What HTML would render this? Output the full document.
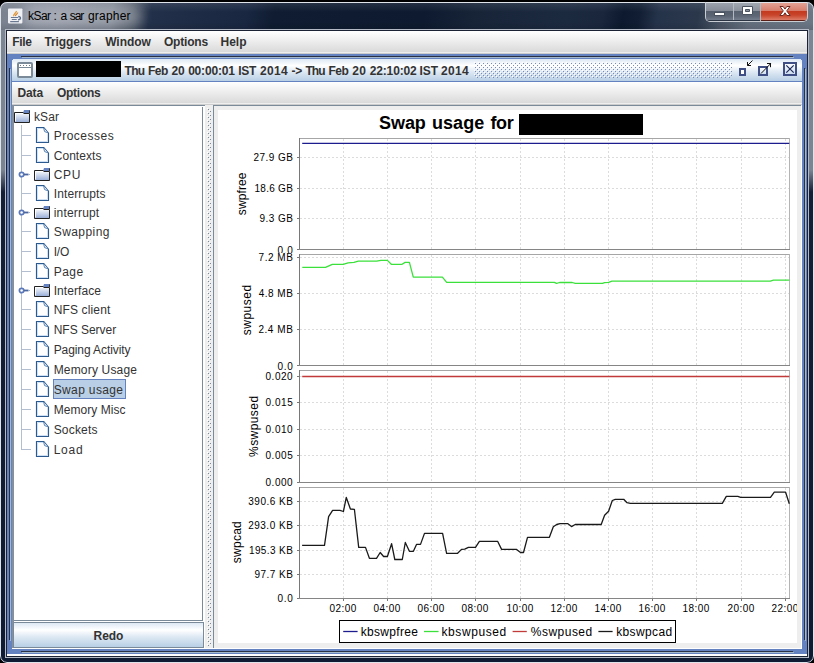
<!DOCTYPE html>
<html><head><meta charset="utf-8"><title>kSar : a sar grapher</title>
<style>
html,body{margin:0;padding:0;}
body{width:814px;height:663px;overflow:hidden;position:relative;background:#000;font-family:"Liberation Sans",sans-serif;font-size:12px;color:#333;}
div{position:absolute;box-sizing:border-box;}
svg{position:absolute;left:0;top:0;overflow:visible;}
text{font-family:"Liberation Sans",sans-serif;white-space:pre;}
</style></head><body>

<div style="left:0;top:2px;width:814px;height:661px;border-radius:7px;overflow:hidden;background:#0d1a2e;">
  <div style="left:0;top:0;width:814px;height:661px;background:linear-gradient(to bottom,#7d8694 0px,#7b8492 168px,#131f36 190px,#0f1b32 661px);"></div>
  <div style="left:0;top:0;width:814px;height:28px;background:linear-gradient(100deg,#7a8290 0px,#808796 60px,#727a88 112px,#4a5464 133px,#223049 150px,#1d2b44 200px,#192741 245px,#0f1c31 272px,#0e1a2f 420px,#172438 470px,#1c2a40 560px,#19263c 596px,#0c192e 616px,#111e33 632px,#25334a 650px,#2b384c 690px,#4a5565 712px,#646f7e 740px,#6d7887 814px);"></div>
  <div style="left:0;top:0;width:814px;height:28px;background:linear-gradient(to bottom,rgba(255,255,255,.10) 0px,rgba(255,255,255,0) 10px,rgba(0,0,0,0) 20px,rgba(0,0,0,.10) 28px);"></div>
  <div style="left:22px;top:3px;width:120px;height:22px;border-radius:11px;background:rgba(255,255,255,.30);filter:blur(6px);"></div>
  <div style="left:0;top:0;width:814px;height:661px;border-radius:7px;border:1px solid #dfe3ea;"></div>
</div>
<div style="left:5px;top:29px;width:804px;height:629px;border:1px solid #b4bac5;"></div>
<div style="left:6px;top:30px;width:802px;height:627px;border:1px solid #1a2233;background:#fff;"></div>

<svg width="814" height="32" viewBox="0 0 814 32">
  <rect x="8" y="8.4" width="14.4" height="15" rx="0.8" fill="#eef0f4"/>
  <path d="M13.7 16.3 C13 14.2 15.8 13.4 16.6 11" stroke="#e39a3c" stroke-width="1.3" fill="none"/>
  <path d="M15.5 16.1 C15.1 14.7 17.5 14.1 17.8 12.5" stroke="#d9822b" stroke-width="1.2" fill="none"/>
  <path d="M10.9 17.5 H18 M11.8 19.5 H16.7 M10.2 21.6 H18.9" stroke="#6a7891" stroke-width="1.1" fill="none"/>
  <path d="M18.2 16.5 C21.4 16.7 21.2 19.6 18 19.8" stroke="#5f6f8c" stroke-width="1.3" fill="none"/>
</svg>

<div style="left:705px;top:2px;width:103px;height:20px;border:1px solid #c9cdd4;border-top:none;border-radius:0 0 5px 5px;"></div>
<div style="left:706px;top:3px;width:101px;height:18px;border-radius:0 0 4px 4px;overflow:hidden;background:#b3b8c1;">
  <div style="left:0;top:0;width:27px;height:17px;background:linear-gradient(to bottom,#9da3ad 0,#858c98 8px,#555e6c 8px,#5b6473 13px,#727b89 17px);"></div>
  <div style="left:28px;top:0;width:26px;height:17px;background:linear-gradient(to bottom,#a2a8b1 0,#8a919c 8px,#58616f 8px,#5e6776 13px,#757e8c 17px);"></div>
  <div style="left:55px;top:0;width:46px;height:17px;background:linear-gradient(to bottom,#e3a294 0,#d67d6c 8px,#c2391f 8px,#c8442a 12px,#dc7c68 17px);"></div>
  <div style="left:0;top:17px;width:54px;height:1px;background:#2b3443;"></div>
  <div style="left:55px;top:17px;width:46px;height:1px;background:#5a2018;"></div>
</div>
<svg width="814" height="32" viewBox="0 0 814 32">
  <rect x="714.5" y="12.5" width="10" height="3" fill="#fff" stroke="#4a5260" stroke-width="1"/>
  <path d="M742.5 6.5h10v8h-10z M745.5 9.5h4v2h-4z" fill="#fff" fill-rule="evenodd" stroke="#4a5260" stroke-width="1"/>
  <path d="M780 6.5h3.2l1.8 2.6l1.8-2.6h3.2l-3.3 4.4l3.4 4.6h-3.3l-1.8-2.7l-1.8 2.7h-3.3l3.4-4.6z" fill="#fff" stroke="#6e2a20" stroke-width="1" stroke-linejoin="round"/>
</svg>

<div style="left:7px;top:31px;width:800px;height:23px;background:linear-gradient(to bottom,#fff 0,#dadada 21px);"></div>
<div style="left:7px;top:52px;width:800px;height:1px;background:#eee;"></div>
<div style="left:7px;top:53px;width:800px;height:1px;background:#ccc;"></div>

<div style="left:7px;top:54px;width:800px;height:600px;background:#6382bf;"></div>
<div style="left:21px;top:56px;width:772px;height:1px;background:#2a3145;"></div>
<div style="left:22px;top:57px;width:772px;height:1px;background:#a3b8cc;"></div>
<div style="left:21px;top:651px;width:772px;height:1px;background:#2a3145;"></div>
<div style="left:22px;top:652px;width:772px;height:1px;background:#a3b8cc;"></div>
<div style="left:9px;top:68px;width:1px;height:572px;background:#2a3145;"></div>
<div style="left:10px;top:69px;width:1px;height:572px;background:#a3b8cc;"></div>
<div style="left:804px;top:68px;width:1px;height:572px;background:#2a3145;"></div>
<div style="left:805px;top:69px;width:1px;height:572px;background:#a3b8cc;"></div>
<div style="left:7px;top:654px;width:800px;height:2px;background:#fff;"></div>
<div style="left:12px;top:59px;width:790px;height:590px;background:#eee;"></div>
<div style="left:12px;top:59px;width:790px;height:23px;background:linear-gradient(to bottom,#dde8f3 0,#fff 6.6px,#dde8f3 13.2px,#b8cfe5 22px);"></div>
<div style="left:12px;top:81px;width:790px;height:1px;background:#6382bf;"></div>
<div style="left:12px;top:59px;width:1px;height:1px;background:#6382bf;"></div>
<div style="left:801px;top:59px;width:1px;height:1px;background:#6382bf;"></div>
<svg width="814" height="110" viewBox="0 0 814 110">
  <defs>
    <pattern id="bumps" x="474" y="62" width="4" height="4" patternUnits="userSpaceOnUse">
      <rect x="0" y="0" width="1" height="1" fill="#fff"/><rect x="2" y="2" width="1" height="1" fill="#fff"/>
      <rect x="1" y="1" width="1" height="1" fill="#7b8cb4"/><rect x="3" y="3" width="1" height="1" fill="#7b8cb4"/>
    </pattern>
    <linearGradient id="ig" x1="0" y1="0" x2="0" y2="1"><stop offset="0" stop-color="#fff"/><stop offset="1" stop-color="#c8daee"/></linearGradient>
  </defs>
  <rect x="18" y="63" width="14" height="14" rx="1" fill="#fff" stroke="#7a8a99" stroke-width="2"/>
  <rect x="19" y="67" width="12" height="1" fill="#7a8a99"/>
  <rect x="20" y="65" width="1" height="1" fill="#6c7a88"/><rect x="23" y="65" width="1" height="1" fill="#6c7a88"/><rect x="26" y="65" width="1" height="1" fill="#6c7a88"/><rect x="29" y="65" width="1" height="1" fill="#6c7a88"/>
  <rect x="36" y="61" width="85" height="16" fill="#000"/>
  <rect x="474" y="62" width="258" height="16" fill="url(#bumps)" shape-rendering="crispEdges"/>
  <rect x="740" y="69" width="5" height="6" fill="#fff" stroke="#3f4f86" stroke-width="2"/>
  <path d="M752.5 60.5 L747.5 65.5 M747.5 62 V65.5 H751" stroke="#111" stroke-width="1" fill="none"/>
  <rect x="759" y="67" width="8" height="8" fill="url(#ig)" stroke="#3f4f86" stroke-width="2"/>
  <path d="M761 73.5 L770.5 63.8 M767 63.5 H771 M770.5 63.5 V67.2" stroke="#111" stroke-width="1" fill="none"/>
  <rect x="784" y="63" width="12" height="12" fill="url(#ig)" stroke="#3f4f86" stroke-width="2"/>
  <path d="M786.3 65.3 L793.7 72.7 M793.7 65.3 L786.3 72.7" stroke="#1f2a5a" stroke-width="1.2" fill="none"/>
</svg>

<div style="left:12px;top:82px;width:790px;height:23px;background:linear-gradient(to bottom,#fff 0,#dadada 21px);"></div>
<div style="left:12px;top:103px;width:790px;height:1px;background:#eee;"></div>
<div style="left:12px;top:104px;width:790px;height:1px;background:#ccc;"></div>

<div style="left:12px;top:105px;width:192px;height:517px;background:#fff;"></div>
<div style="left:12px;top:105px;width:193px;height:1px;background:#7a8a99;"></div>
<div style="left:12px;top:105px;width:2px;height:544px;background:#8490a0;"></div>
<div style="left:202px;top:107px;width:1px;height:514px;background:#7a8a99;"></div>
<div style="left:14px;top:620px;width:189px;height:1px;background:#7a8a99;"></div>
<div style="left:14px;top:621px;width:191px;height:1px;background:#fff;"></div>
<div style="left:203px;top:106px;width:2px;height:543px;background:#fff;"></div>
<div style="left:13px;top:622px;width:191px;height:26px;border:1px solid #7a8a99;background:linear-gradient(to bottom,#dde8f3 0,#fff 7px,#dde8f3 14px,#b8cfe5 24px);"></div>
<div style="left:12px;top:648px;width:790px;height:1px;background:#fff;"></div>
<div style="left:205px;top:105px;width:8px;height:543px;background:#eee;"></div>
<svg width="814" height="663" viewBox="0 0 814 663" shape-rendering="crispEdges">
<defs>
 <pattern id="dv" x="207" y="108" width="4" height="4" patternUnits="userSpaceOnUse">
  <rect x="0" y="0" width="1" height="1" fill="#fff"/><rect x="2" y="2" width="1" height="1" fill="#fff"/>
  <rect x="1" y="1" width="1" height="1" fill="#7a8a99"/><rect x="3" y="3" width="1" height="1" fill="#7a8a99"/>
 </pattern>
 <linearGradient id="fg" x1="0" y1="0" x2="0" y2="1"><stop offset="0" stop-color="#fff"/><stop offset="1" stop-color="#94abd6"/></linearGradient>
 <linearGradient id="lg" x1="0" y1="0" x2="1" y2="1"><stop offset="0" stop-color="#fff"/><stop offset="1" stop-color="#dbe7f5"/></linearGradient>
 <g id="folder" shape-rendering="auto">
   <path d="M9 3 L10 0 H16 V3 Z" fill="#6382bf"/>
   <path d="M0.5 2.5 H9.2 L9.8 3.5 H15.5 V12.5 H0.5 Z" fill="url(#fg)" stroke="#222" stroke-width="1"/>
   <path d="M15.5 0.5 V3" stroke="#333" stroke-width="1"/>
   <path d="M1.5 11.5 V3.5 H9" stroke="#fff" stroke-width="1" fill="none" opacity=".9"/>
 </g>
 <g id="file" shape-rendering="auto">
   <path d="M0.5 0.5 H7.8 L12.5 6.2 V15.5 H0.5 Z" fill="#fff" stroke="#2d5a8e" stroke-width="1.15" stroke-linejoin="miter"/>
   <path d="M1.5 14.5 V1.5 H7.2 M11.5 7 V14.5 H1.5" fill="none" stroke="#cfe0f5" stroke-width="1"/>
   <path d="M7.6 1 L8.6 4.6 L12 5.8" stroke="#4d79ad" stroke-width="0.9" fill="#e6effa"/>
 </g>
 <g id="handle" shape-rendering="auto">
   <circle cx="2.6" cy="0.5" r="2.2" fill="#fff" stroke="#5b78b8" stroke-width="1.7"/>
   <rect x="5" y="-0.4" width="4.5" height="1.8" fill="#4c66a0"/>
   <rect x="9.5" y="0" width="1.5" height="1" fill="#9fb0cc"/>
 </g>
</defs>
<rect x="207" y="108" width="4" height="538" fill="url(#dv)"/>
<use href="#folder" x="14" y="110"/>
<use href="#file" x="36" y="127"/>
<use href="#file" x="36" y="147"/>
<use href="#folder" x="34" y="168"/>
<use href="#file" x="36" y="185"/>
<use href="#folder" x="34" y="206"/>
<use href="#file" x="36" y="223"/>
<use href="#file" x="36" y="243"/>
<use href="#file" x="36" y="263"/>
<use href="#folder" x="34" y="284"/>
<use href="#file" x="36" y="301"/>
<use href="#file" x="36" y="321"/>
<use href="#file" x="36" y="341"/>
<use href="#file" x="36" y="361"/>
<use href="#file" x="36" y="381"/>
<rect x="53" y="379" width="73" height="20" fill="#b8cfe5"/><rect x="53.5" y="379.5" width="72" height="19" fill="none" stroke="#6382bf" stroke-width="1"/>
<use href="#file" x="36" y="401"/>
<use href="#file" x="36" y="421"/>
<use href="#file" x="36" y="441"/>
<rect x="21" y="125" width="1" height="325" fill="#b3bfd0"/>
<rect x="21" y="135" width="10" height="1" fill="#b3bfd0"/>
<rect x="21" y="155" width="10" height="1" fill="#b3bfd0"/>
<use href="#handle" x="19" y="174"/>
<rect x="21" y="193" width="10" height="1" fill="#b3bfd0"/>
<use href="#handle" x="19" y="212"/>
<rect x="21" y="231" width="10" height="1" fill="#b3bfd0"/>
<rect x="21" y="251" width="10" height="1" fill="#b3bfd0"/>
<rect x="21" y="271" width="10" height="1" fill="#b3bfd0"/>
<use href="#handle" x="19" y="290"/>
<rect x="21" y="309" width="10" height="1" fill="#b3bfd0"/>
<rect x="21" y="329" width="10" height="1" fill="#b3bfd0"/>
<rect x="21" y="349" width="10" height="1" fill="#b3bfd0"/>
<rect x="21" y="369" width="10" height="1" fill="#b3bfd0"/>
<rect x="21" y="389" width="10" height="1" fill="#b3bfd0"/>
<rect x="21" y="409" width="10" height="1" fill="#b3bfd0"/>
<rect x="21" y="429" width="10" height="1" fill="#b3bfd0"/>
<rect x="21" y="449" width="10" height="1" fill="#b3bfd0"/>
</svg>

<div style="left:213px;top:105px;width:588px;height:543px;background:#eee;border-left:1px solid #7a8a99;border-top:1px solid #7a8a99;"></div>
<div style="left:801px;top:106px;width:1px;height:543px;background:#fff;"></div>
<div style="left:218px;top:110px;width:579px;height:533px;background:#fff;"></div>
<div style="left:519px;top:114px;width:124px;height:21px;background:#000;"></div>
<svg width="814" height="663" viewBox="0 0 814 663">
<g shape-rendering="crispEdges">
<rect x="299" y="138" width="491" height="1" fill="#a6a6a6"/>
<rect x="789" y="138" width="1" height="112" fill="#b4b4b4"/>
<line x1="300" y1="157.5" x2="789" y2="157.5" stroke="#dcdcdc" stroke-width="1" stroke-dasharray="2,2"/>
<line x1="300" y1="188.5" x2="789" y2="188.5" stroke="#dcdcdc" stroke-width="1" stroke-dasharray="2,2"/>
<line x1="300" y1="218.5" x2="789" y2="218.5" stroke="#dcdcdc" stroke-width="1" stroke-dasharray="2,2"/>
<line x1="343.5" y1="139" x2="343.5" y2="249" stroke="#dcdcdc" stroke-width="1" stroke-dasharray="2,2"/>
<line x1="387.5" y1="139" x2="387.5" y2="249" stroke="#dcdcdc" stroke-width="1" stroke-dasharray="2,2"/>
<line x1="431.5" y1="139" x2="431.5" y2="249" stroke="#dcdcdc" stroke-width="1" stroke-dasharray="2,2"/>
<line x1="475.5" y1="139" x2="475.5" y2="249" stroke="#dcdcdc" stroke-width="1" stroke-dasharray="2,2"/>
<line x1="520.5" y1="139" x2="520.5" y2="249" stroke="#dcdcdc" stroke-width="1" stroke-dasharray="2,2"/>
<line x1="564.5" y1="139" x2="564.5" y2="249" stroke="#dcdcdc" stroke-width="1" stroke-dasharray="2,2"/>
<line x1="608.5" y1="139" x2="608.5" y2="249" stroke="#dcdcdc" stroke-width="1" stroke-dasharray="2,2"/>
<line x1="652.5" y1="139" x2="652.5" y2="249" stroke="#dcdcdc" stroke-width="1" stroke-dasharray="2,2"/>
<line x1="696.5" y1="139" x2="696.5" y2="249" stroke="#dcdcdc" stroke-width="1" stroke-dasharray="2,2"/>
<line x1="741.5" y1="139" x2="741.5" y2="249" stroke="#dcdcdc" stroke-width="1" stroke-dasharray="2,2"/>
<line x1="785.5" y1="139" x2="785.5" y2="249" stroke="#dcdcdc" stroke-width="1" stroke-dasharray="2,2"/>
<rect x="299" y="138" width="1" height="112" fill="#787878"/>
<rect x="299" y="249" width="491" height="1" fill="#858585"/>
<rect x="297" y="157" width="2" height="1" fill="#787878"/>
<rect x="297" y="188" width="2" height="1" fill="#787878"/>
<rect x="297" y="218" width="2" height="1" fill="#787878"/>
<rect x="297" y="249" width="2" height="1" fill="#787878"/>
<rect x="299" y="254" width="491" height="1" fill="#a6a6a6"/>
<rect x="789" y="254" width="1" height="112" fill="#b4b4b4"/>
<line x1="300" y1="257.5" x2="789" y2="257.5" stroke="#dcdcdc" stroke-width="1" stroke-dasharray="2,2"/>
<line x1="300" y1="293.5" x2="789" y2="293.5" stroke="#dcdcdc" stroke-width="1" stroke-dasharray="2,2"/>
<line x1="300" y1="329.5" x2="789" y2="329.5" stroke="#dcdcdc" stroke-width="1" stroke-dasharray="2,2"/>
<line x1="343.5" y1="255" x2="343.5" y2="365" stroke="#dcdcdc" stroke-width="1" stroke-dasharray="2,2"/>
<line x1="387.5" y1="255" x2="387.5" y2="365" stroke="#dcdcdc" stroke-width="1" stroke-dasharray="2,2"/>
<line x1="431.5" y1="255" x2="431.5" y2="365" stroke="#dcdcdc" stroke-width="1" stroke-dasharray="2,2"/>
<line x1="475.5" y1="255" x2="475.5" y2="365" stroke="#dcdcdc" stroke-width="1" stroke-dasharray="2,2"/>
<line x1="520.5" y1="255" x2="520.5" y2="365" stroke="#dcdcdc" stroke-width="1" stroke-dasharray="2,2"/>
<line x1="564.5" y1="255" x2="564.5" y2="365" stroke="#dcdcdc" stroke-width="1" stroke-dasharray="2,2"/>
<line x1="608.5" y1="255" x2="608.5" y2="365" stroke="#dcdcdc" stroke-width="1" stroke-dasharray="2,2"/>
<line x1="652.5" y1="255" x2="652.5" y2="365" stroke="#dcdcdc" stroke-width="1" stroke-dasharray="2,2"/>
<line x1="696.5" y1="255" x2="696.5" y2="365" stroke="#dcdcdc" stroke-width="1" stroke-dasharray="2,2"/>
<line x1="741.5" y1="255" x2="741.5" y2="365" stroke="#dcdcdc" stroke-width="1" stroke-dasharray="2,2"/>
<line x1="785.5" y1="255" x2="785.5" y2="365" stroke="#dcdcdc" stroke-width="1" stroke-dasharray="2,2"/>
<rect x="299" y="254" width="1" height="112" fill="#787878"/>
<rect x="299" y="365" width="491" height="1" fill="#858585"/>
<rect x="297" y="257" width="2" height="1" fill="#787878"/>
<rect x="297" y="293" width="2" height="1" fill="#787878"/>
<rect x="297" y="329" width="2" height="1" fill="#787878"/>
<rect x="297" y="365" width="2" height="1" fill="#787878"/>
<rect x="299" y="370" width="491" height="1" fill="#a6a6a6"/>
<rect x="789" y="370" width="1" height="113" fill="#b4b4b4"/>
<line x1="300" y1="376.5" x2="789" y2="376.5" stroke="#dcdcdc" stroke-width="1" stroke-dasharray="2,2"/>
<line x1="300" y1="402.5" x2="789" y2="402.5" stroke="#dcdcdc" stroke-width="1" stroke-dasharray="2,2"/>
<line x1="300" y1="429.5" x2="789" y2="429.5" stroke="#dcdcdc" stroke-width="1" stroke-dasharray="2,2"/>
<line x1="300" y1="455.5" x2="789" y2="455.5" stroke="#dcdcdc" stroke-width="1" stroke-dasharray="2,2"/>
<line x1="343.5" y1="371" x2="343.5" y2="482" stroke="#dcdcdc" stroke-width="1" stroke-dasharray="2,2"/>
<line x1="387.5" y1="371" x2="387.5" y2="482" stroke="#dcdcdc" stroke-width="1" stroke-dasharray="2,2"/>
<line x1="431.5" y1="371" x2="431.5" y2="482" stroke="#dcdcdc" stroke-width="1" stroke-dasharray="2,2"/>
<line x1="475.5" y1="371" x2="475.5" y2="482" stroke="#dcdcdc" stroke-width="1" stroke-dasharray="2,2"/>
<line x1="520.5" y1="371" x2="520.5" y2="482" stroke="#dcdcdc" stroke-width="1" stroke-dasharray="2,2"/>
<line x1="564.5" y1="371" x2="564.5" y2="482" stroke="#dcdcdc" stroke-width="1" stroke-dasharray="2,2"/>
<line x1="608.5" y1="371" x2="608.5" y2="482" stroke="#dcdcdc" stroke-width="1" stroke-dasharray="2,2"/>
<line x1="652.5" y1="371" x2="652.5" y2="482" stroke="#dcdcdc" stroke-width="1" stroke-dasharray="2,2"/>
<line x1="696.5" y1="371" x2="696.5" y2="482" stroke="#dcdcdc" stroke-width="1" stroke-dasharray="2,2"/>
<line x1="741.5" y1="371" x2="741.5" y2="482" stroke="#dcdcdc" stroke-width="1" stroke-dasharray="2,2"/>
<line x1="785.5" y1="371" x2="785.5" y2="482" stroke="#dcdcdc" stroke-width="1" stroke-dasharray="2,2"/>
<rect x="299" y="370" width="1" height="113" fill="#787878"/>
<rect x="299" y="482" width="491" height="1" fill="#858585"/>
<rect x="297" y="376" width="2" height="1" fill="#787878"/>
<rect x="297" y="402" width="2" height="1" fill="#787878"/>
<rect x="297" y="429" width="2" height="1" fill="#787878"/>
<rect x="297" y="455" width="2" height="1" fill="#787878"/>
<rect x="297" y="482" width="2" height="1" fill="#787878"/>
<rect x="299" y="487" width="491" height="1" fill="#a6a6a6"/>
<rect x="789" y="487" width="1" height="112" fill="#b4b4b4"/>
<line x1="300" y1="501.5" x2="789" y2="501.5" stroke="#dcdcdc" stroke-width="1" stroke-dasharray="2,2"/>
<line x1="300" y1="525.5" x2="789" y2="525.5" stroke="#dcdcdc" stroke-width="1" stroke-dasharray="2,2"/>
<line x1="300" y1="550.5" x2="789" y2="550.5" stroke="#dcdcdc" stroke-width="1" stroke-dasharray="2,2"/>
<line x1="300" y1="574.5" x2="789" y2="574.5" stroke="#dcdcdc" stroke-width="1" stroke-dasharray="2,2"/>
<line x1="343.5" y1="488" x2="343.5" y2="598" stroke="#dcdcdc" stroke-width="1" stroke-dasharray="2,2"/>
<line x1="387.5" y1="488" x2="387.5" y2="598" stroke="#dcdcdc" stroke-width="1" stroke-dasharray="2,2"/>
<line x1="431.5" y1="488" x2="431.5" y2="598" stroke="#dcdcdc" stroke-width="1" stroke-dasharray="2,2"/>
<line x1="475.5" y1="488" x2="475.5" y2="598" stroke="#dcdcdc" stroke-width="1" stroke-dasharray="2,2"/>
<line x1="520.5" y1="488" x2="520.5" y2="598" stroke="#dcdcdc" stroke-width="1" stroke-dasharray="2,2"/>
<line x1="564.5" y1="488" x2="564.5" y2="598" stroke="#dcdcdc" stroke-width="1" stroke-dasharray="2,2"/>
<line x1="608.5" y1="488" x2="608.5" y2="598" stroke="#dcdcdc" stroke-width="1" stroke-dasharray="2,2"/>
<line x1="652.5" y1="488" x2="652.5" y2="598" stroke="#dcdcdc" stroke-width="1" stroke-dasharray="2,2"/>
<line x1="696.5" y1="488" x2="696.5" y2="598" stroke="#dcdcdc" stroke-width="1" stroke-dasharray="2,2"/>
<line x1="741.5" y1="488" x2="741.5" y2="598" stroke="#dcdcdc" stroke-width="1" stroke-dasharray="2,2"/>
<line x1="785.5" y1="488" x2="785.5" y2="598" stroke="#dcdcdc" stroke-width="1" stroke-dasharray="2,2"/>
<rect x="299" y="487" width="1" height="112" fill="#787878"/>
<rect x="299" y="598" width="491" height="1" fill="#858585"/>
<rect x="297" y="501" width="2" height="1" fill="#787878"/>
<rect x="297" y="525" width="2" height="1" fill="#787878"/>
<rect x="297" y="550" width="2" height="1" fill="#787878"/>
<rect x="297" y="574" width="2" height="1" fill="#787878"/>
<rect x="297" y="598" width="2" height="1" fill="#787878"/>
<rect x="343" y="599" width="1" height="2" fill="#787878"/>
<rect x="387" y="599" width="1" height="2" fill="#787878"/>
<rect x="431" y="599" width="1" height="2" fill="#787878"/>
<rect x="475" y="599" width="1" height="2" fill="#787878"/>
<rect x="520" y="599" width="1" height="2" fill="#787878"/>
<rect x="564" y="599" width="1" height="2" fill="#787878"/>
<rect x="608" y="599" width="1" height="2" fill="#787878"/>
<rect x="652" y="599" width="1" height="2" fill="#787878"/>
<rect x="696" y="599" width="1" height="2" fill="#787878"/>
<rect x="741" y="599" width="1" height="2" fill="#787878"/>
<rect x="785" y="599" width="1" height="2" fill="#787878"/>
</g>
<clipPath id="c0"><rect x="260" y="240" width="40" height="13"/></clipPath>
<text x="277.41" y="254" font-size="10" fill="#000" letter-spacing="0.690" clip-path="url(#c0)">0.0</text>
<text x="253.50" y="160.8" font-size="10" fill="#000" letter-spacing="0.440">27.9 GB</text>
<text x="254.44" y="191.8" font-size="10" fill="#000" letter-spacing="0.283">18.6 GB</text>
<text x="259.43" y="221.8" font-size="10" fill="#000" letter-spacing="0.454">9.3 GB</text>
<text x="258.59" y="260.8" font-size="10" fill="#000" letter-spacing="0.512">7.2 MB</text>
<text x="258.67" y="296.8" font-size="10" fill="#000" letter-spacing="0.495">4.8 MB</text>
<text x="258.40" y="332.8" font-size="10" fill="#000" letter-spacing="0.550">2.4 MB</text>
<text x="277.41" y="369.8" font-size="10" fill="#000" letter-spacing="0.690">0.0</text>
<text x="265.51" y="379.8" font-size="10" fill="#000" letter-spacing="0.539">0.020</text>
<text x="265.51" y="405.8" font-size="10" fill="#000" letter-spacing="0.547">0.015</text>
<text x="265.51" y="432.8" font-size="10" fill="#000" letter-spacing="0.539">0.010</text>
<text x="265.51" y="458.8" font-size="10" fill="#000" letter-spacing="0.547">0.005</text>
<text x="265.51" y="485.8" font-size="10" fill="#000" letter-spacing="0.539">0.000</text>
<text x="248.32" y="504.8" font-size="10" fill="#000" letter-spacing="0.481">390.6 KB</text>
<text x="248.20" y="528.8" font-size="10" fill="#000" letter-spacing="0.498">293.0 KB</text>
<text x="248.94" y="553.8" font-size="10" fill="#000" letter-spacing="0.392">195.3 KB</text>
<text x="254.43" y="577.8" font-size="10" fill="#000" letter-spacing="0.469">97.7 KB</text>
<text x="277.41" y="601.8" font-size="10" fill="#000" letter-spacing="0.690">0.0</text>
<text x="329.60" y="611.6" font-size="10" fill="#000" letter-spacing="0.442">02:00</text>
<text x="373.60" y="611.6" font-size="10" fill="#000" letter-spacing="0.442">04:00</text>
<text x="417.60" y="611.6" font-size="10" fill="#000" letter-spacing="0.442">06:00</text>
<text x="461.60" y="611.6" font-size="10" fill="#000" letter-spacing="0.442">08:00</text>
<text x="506.60" y="611.6" font-size="10" fill="#000" letter-spacing="0.442">10:00</text>
<text x="550.60" y="611.6" font-size="10" fill="#000" letter-spacing="0.442">12:00</text>
<text x="594.60" y="611.6" font-size="10" fill="#000" letter-spacing="0.442">14:00</text>
<text x="638.60" y="611.6" font-size="10" fill="#000" letter-spacing="0.442">16:00</text>
<text x="682.60" y="611.6" font-size="10" fill="#000" letter-spacing="0.442">18:00</text>
<text x="727.60" y="611.6" font-size="10" fill="#000" letter-spacing="0.442">20:00</text>
<text x="771.60" y="611.6" font-size="10" fill="#000" letter-spacing="0.442" clip-path="url(#c1)">22:00</text>
<clipPath id="c1"><rect x="760" y="600" width="37" height="15"/></clipPath>
<text transform="translate(246.4,215.13) rotate(-90)" font-size="12" fill="#000" letter-spacing="0.108">swpfree</text>
<text transform="translate(251.3,335.33) rotate(-90)" font-size="12" fill="#000" letter-spacing="0.524">swpused</text>
<text transform="translate(258.4,456.93) rotate(-90)" font-size="12" fill="#000" letter-spacing="0.424">%swpused</text>
<text transform="translate(241.2,563.23) rotate(-90)" font-size="12" fill="#000" letter-spacing="0.264">swpcad</text>
<path d="M302.2 143.4 H789.3" stroke="#1c1c8e" stroke-width="1.3" fill="none"/>
<path d="M302.3 267.3 L325.5 267.3 L332.3 264.3 L343.2 264.3 L348.1 262.8 L354.0 262.4 L358.3 261.2 L376.6 261.2 L380.9 260.4 L387.4 260.4 L391.3 264.3 L402.1 264.3 L405.1 262.4 L409.4 262.4 L413.3 277.1 L442.4 277.1 L446.7 282.4 L554.4 282.4 L556.5 283.4 L559.6 282.5 L572.2 282.5 L575.3 283.4 L602.5 283.4 L604.6 282.7 L608.7 282.3 L611.9 281.1 L770.4 281.1 L773.5 280.2 L789.3 280.2" stroke="#3be03b" stroke-width="1.3" fill="none" stroke-linejoin="round"/>
<path d="M302.2 376.5 H789.3" stroke="#c23a3a" stroke-width="1.3" fill="none"/>
<path d="M302.1 545.4 L324.5 545.4 L328.6 516.7 L332.6 510.4 L340.0 510.4 L343.4 511.5 L346.3 497.5 L350.4 509.0 L354.4 509.3 L358.7 547.4 L365.5 547.4 L369.4 558.3 L376.5 558.3 L380.2 552.5 L383.6 556.5 L387.4 556.5 L391.6 543.7 L394.8 559.5 L402.3 559.5 L405.3 542.5 L409.4 551.3 L413.4 551.3 L416.5 544.4 L420.5 544.4 L424.5 533.4 L442.6 533.4 L446.6 553.3 L457.6 553.3 L461.5 549.4 L464.7 549.1 L468.4 547.4 L475.5 547.4 L479.4 541.3 L497.6 541.3 L501.6 549.4 L516.6 549.4 L520.5 552.5 L523.5 552.5 L527.5 537.3 L549.4 537.3 L553.3 526.7 L556.7 524.5 L560.0 523.6 L567.6 523.6 L571.5 526.6 L575.2 524.5 L601.2 524.5 L604.6 515.2 L608.6 511.2 L612.3 500.5 L615.3 499.3 L623.7 499.3 L627.0 502.7 L630.3 503.4 L722.3 503.4 L726.3 496.4 L737.8 496.4 L740.7 497.4 L770.5 497.4 L774.3 492.2 L785.6 492.2 L789.3 503.8" stroke="#1a1a1a" stroke-width="1.3" fill="none" stroke-linejoin="round"/>
<rect x="339.5" y="620.5" width="336" height="22" fill="#fff" stroke="#000" stroke-width="1" shape-rendering="crispEdges"/>
<path d="M343.2 631.5 H357.6" stroke="#1c1c8e" stroke-width="1.3"/>
<path d="M424 631.5 H438.6" stroke="#3be03b" stroke-width="1.3"/>
<path d="M512.6 631.5 H526.8" stroke="#c23a3a" stroke-width="1.3"/>
<path d="M598.4 631.5 H612.6" stroke="#1a1a1a" stroke-width="1.3"/>
<text x="360.79" y="636" font-size="12" fill="#000" letter-spacing="0.294">kbswpfree</text>
<text x="441.49" y="636" font-size="12" fill="#000" letter-spacing="0.593">kbswpused</text>
<text x="530.87" y="636" font-size="12" fill="#000" letter-spacing="0.467">%swpused</text>
<text x="616.19" y="636" font-size="12" fill="#000" letter-spacing="0.374">kbswpcad</text>
</svg>
<svg width="814" height="663" viewBox="0 0 814 663">
<text x="28.09" y="20" font-size="12" fill="#000" letter-spacing="-0.589">kSar</text>
<text x="53.40" y="20" font-size="12" fill="#000">:</text>
<text x="60.39" y="20" font-size="12" fill="#000">a</text>
<text x="69.77" y="20" font-size="12" fill="#000" letter-spacing="-1.118">sar</text>
<text x="87.90" y="20" font-size="12" fill="#000" letter-spacing="0.224">grapher</text>
<text x="12.20" y="46" font-size="12" fill="#333" font-weight="bold" letter-spacing="-0.353">File</text>
<text x="44.47" y="46" font-size="12" fill="#333" font-weight="bold" letter-spacing="-0.098">Triggers</text>
<text x="105.19" y="46" font-size="12" fill="#333" font-weight="bold" letter-spacing="-0.039">Window</text>
<text x="163.91" y="46" font-size="12" fill="#333" font-weight="bold" letter-spacing="-0.191">Options</text>
<text x="220.60" y="46" font-size="12" fill="#333" font-weight="bold" letter-spacing="-0.036">Help</text>
<text x="124.57" y="75" font-size="12" fill="#333" font-weight="bold" letter-spacing="-0.732">Thu</text>
<text x="147.90" y="75" font-size="12" fill="#333" font-weight="bold" letter-spacing="-0.420">Feb</text>
<text x="171.48" y="75" font-size="12" fill="#333" font-weight="bold" letter-spacing="-0.239">20</text>
<text x="188.13" y="75" font-size="12" fill="#333" font-weight="bold" letter-spacing="-0.175">00:00:01</text>
<text x="238.30" y="75" font-size="12" fill="#333" font-weight="bold" letter-spacing="-0.368">IST</text>
<text x="260.08" y="75" font-size="12" fill="#333" font-weight="bold" letter-spacing="0.262">2014</text>
<text x="291.43" y="75" font-size="12" fill="#333" font-weight="bold" letter-spacing="-0.149">-&gt;</text>
<text x="305.47" y="75" font-size="12" fill="#333" font-weight="bold" letter-spacing="-0.932">Thu</text>
<text x="328.40" y="75" font-size="12" fill="#333" font-weight="bold" letter-spacing="-0.420">Feb</text>
<text x="352.28" y="75" font-size="12" fill="#333" font-weight="bold" letter-spacing="0.261">20</text>
<text x="369.78" y="75" font-size="12" fill="#333" font-weight="bold" letter-spacing="-0.163">22:10:02</text>
<text x="419.50" y="75" font-size="12" fill="#333" font-weight="bold" letter-spacing="-0.018">IST</text>
<text x="441.08" y="75" font-size="12" fill="#333" font-weight="bold" letter-spacing="0.328">2014</text>
<text x="17.60" y="97" font-size="12" fill="#333" font-weight="bold" letter-spacing="-0.161">Data</text>
<text x="57.01" y="97" font-size="12" fill="#333" font-weight="bold" letter-spacing="-0.274">Options</text>
<text x="93.60" y="639.5" font-size="12" fill="#333" font-weight="bold" letter-spacing="-0.076">Redo</text>
<text x="33.90" y="121" font-size="12" fill="#333" letter-spacing="0.142">kSar</text>
<text x="53.70" y="140" font-size="12" fill="#333" letter-spacing="0.502">Processes</text>
<text x="53.70" y="160" font-size="12" fill="#333" letter-spacing="0.054">Contexts</text>
<text x="53.70" y="179" font-size="12" fill="#333" letter-spacing="0.695">CPU</text>
<text x="53.70" y="198" font-size="12" fill="#333" letter-spacing="0.116">Interrupts</text>
<text x="53.70" y="217" font-size="12" fill="#333" letter-spacing="0.183">interrupt</text>
<text x="53.70" y="236" font-size="12" fill="#333" letter-spacing="0.438">Swapping</text>
<text x="53.70" y="256" font-size="12" fill="#333" letter-spacing="-0.214">I/O</text>
<text x="53.70" y="276" font-size="12" fill="#333" letter-spacing="0.469">Page</text>
<text x="53.70" y="295" font-size="12" fill="#333" letter-spacing="0.067">Interface</text>
<text x="53.70" y="314" font-size="12" fill="#333" letter-spacing="0.138">NFS client</text>
<text x="53.70" y="334" font-size="12" fill="#333" letter-spacing="-0.020">NFS Server</text>
<text x="53.70" y="354" font-size="12" fill="#333" letter-spacing="-0.091">Paging Activity</text>
<text x="53.70" y="374" font-size="12" fill="#333" letter-spacing="0.171">Memory Usage</text>
<text x="53.70" y="394" font-size="12" fill="#333" letter-spacing="0.365">Swap usage</text>
<text x="53.70" y="414" font-size="12" fill="#333" letter-spacing="0.048">Memory Misc</text>
<text x="53.70" y="434" font-size="12" fill="#333" letter-spacing="0.175">Sockets</text>
<text x="53.70" y="454" font-size="12" fill="#333" letter-spacing="0.759">Load</text>
<text x="379.08" y="129" font-size="18" fill="#000" font-weight="bold" letter-spacing="-0.085">Swap</text>
<text x="431.88" y="129" font-size="18" fill="#000" font-weight="bold" letter-spacing="0.102">usage</text>
<text x="490.39" y="129" font-size="18" fill="#000" font-weight="bold" letter-spacing="-0.257">for</text>
</svg>
</body></html>
